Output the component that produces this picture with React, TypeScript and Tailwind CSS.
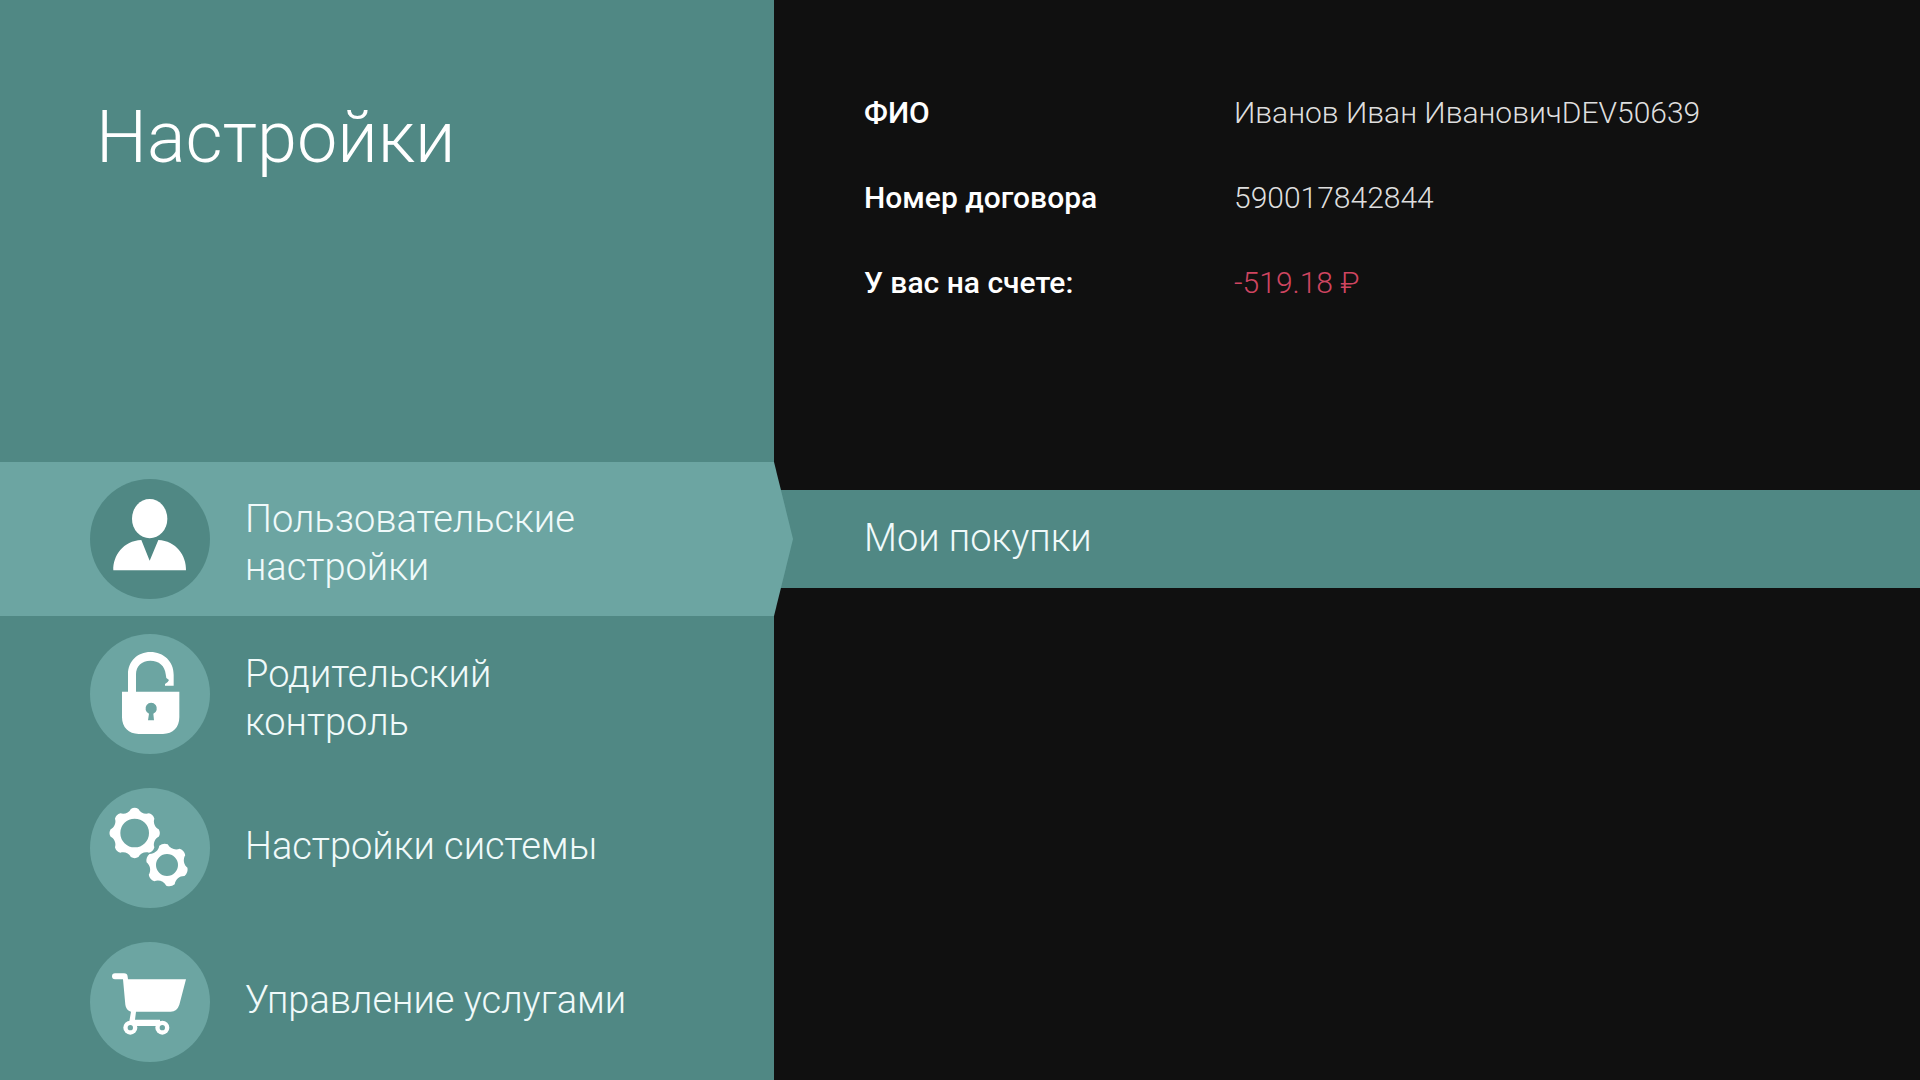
import type { ReactNode } from "react";

function gearPath(cx: number, cy: number, outer: number, dip: number, teeth: number, turn: number) {
  const step = (Math.PI * 2) / teeth;
  const at = (r: number, a: number) =>
    `${(cx + r * Math.sin(a)).toFixed(1)} ${(cy - r * Math.cos(a)).toFixed(1)}`;
  let d = "";
  for (let i = 0; i < teeth; i++) {
    const a = (turn * Math.PI) / 180 + i * step;
    d += `${i ? "L" : "M"}${at(outer - 3, a - step * 0.2)}`;
    d += `Q${at(outer + 3, a)} ${at(outer - 3, a + step * 0.2)}`;
    d += `C${at(dip, a + step * 0.34)} ${at(dip, a + step * 0.66)} ${at(outer - 3, a + step * 0.8)}`;
  }
  return d + "Z";
}

function ring(cx: number, cy: number, r: number) {
  return `M${cx - r} ${cy}a${r} ${r} 0 1 0 ${r * 2} 0a${r} ${r} 0 1 0 ${-r * 2} 0Z`;
}

function Glyph({ children }: { children: ReactNode }) {
  return (
    <svg viewBox="30 26 360 360" className="size-full" fill="#fff" aria-hidden="true">
      {children}
    </svg>
  );
}

const userIcon = (
  <Glyph>
    <ellipse cx="209" cy="145" rx="53" ry="59" />
    <path d="M100 300C98 257 130 211 184 209L209 271L235 209C288 211 320 257 318 300Z" />
  </Glyph>
);

const lockIcon = (
  <Glyph>
    <path
      fillRule="evenodd"
      d="M144 199V146C144 108 173 80 211 80C251 80 281 108 281 148V181H255V176Q264 172 267 164L259 158L257 146C255 122 237 106 211 106C185 106 168 122 168 147V199H298V276C298 306 279 326 249 326H176C146 326 126 306 126 276V199ZM204 285L207 265A17 17 0 1 1 220 265L222 285Z"
    />
  </Glyph>
);

const gearsIcon = (
  <Glyph>
    <path fillRule="evenodd" d={gearPath(164, 161, 76, 63, 8, 0) + ring(164, 161, 43)} />
    <path fillRule="evenodd" d={gearPath(261, 257, 65, 50, 6, -10) + ring(261, 257, 33)} />
  </Glyph>
);

const cartIcon = (
  <Glyph>
    <path d="M105 120H132Q142 120 143 130L144 138H318L298 214Q291 235 272 235H168L165 259H240V278H160Q145 278 148 264L153 235Q138 230 136 214L129 138H105Q96 138 96 129Q96 120 105 120Z" />
    <circle cx="151" cy="283" r="21" />
    <circle cx="247" cy="283" r="21" />
    <circle cx="151" cy="283" r="8" fill="#6ca5a2" />
    <circle cx="247" cy="283" r="8" fill="#6ca5a2" />
  </Glyph>
);

const items = [
  { label: "Пользовательские настройки", icon: userIcon, active: true, twoLine: true },
  { label: "Родительский контроль", icon: lockIcon, active: false, twoLine: true },
  { label: "Настройки системы", icon: gearsIcon, active: false, twoLine: false },
  { label: "Управление услугами", icon: cartIcon, active: false, twoLine: false },
];

const account = [
  { term: "ФИО", value: "Иванов Иван ИвановичDEV50639", tone: "text-[#dedede]" },
  { term: "Номер договора", value: "590017842844", tone: "text-[#dedede]" },
  { term: "У вас на счете:", value: "-519.18 ₽", tone: "text-[#cf4560]" },
];

export default function App() {
  return (
    <div className="flex min-h-screen bg-[#101010] font-['Roboto',sans-serif] font-light text-white">
      <aside className="relative z-10 flex w-[774px] shrink-0 flex-col bg-[#508884]">
        <h1 className="h-[462px] shrink-0 pt-24 pl-24 text-[72px] leading-[84px] font-light">Настройки</h1>
        <nav aria-label="Настройки">
          {items.map((item) => (
            <button
              key={item.label}
              type="button"
              aria-current={item.active ? "page" : undefined}
              className={
                item.active
                  ? "mb-px flex h-[154px] w-[calc(100%+19px)] items-center gap-[35px] bg-[#6ca5a2] pl-[90px] text-left [clip-path:polygon(0_0,calc(100%-19px)_0,100%_50%,calc(100%-19px)_100%,0_100%)]"
                  : "flex h-[154px] w-full items-center gap-[35px] pl-[90px] text-left"
              }
            >
              <span
                className={
                  item.active
                    ? "size-[120px] shrink-0 rounded-full bg-[#508884]"
                    : "size-[120px] shrink-0 rounded-full bg-[#6ca5a2]"
                }
              >
                {item.icon}
              </span>
              <span
                className={
                  item.twoLine
                    ? "w-[400px] pt-2 text-[38px] leading-[48px] text-[#f0fafa]"
                    : "w-[400px] pb-1 text-[38px] leading-[48px] text-[#f0fafa]"
                }
              >
                {item.label}
              </span>
            </button>
          ))}
        </nav>
      </aside>
      <main className="min-w-0 flex-1">
        <dl className="flex h-[490px] flex-col gap-[41px] pt-[91px] pl-[90px] text-[30px] leading-[44px]">
          {account.map((row) => (
            <div key={row.term} className="flex">
              <dt className="w-[370px] shrink-0 font-medium">{row.term}</dt>
              <dd className={row.tone}>{row.value}</dd>
            </div>
          ))}
        </dl>
        <button
          type="button"
          className="flex h-[98px] w-full items-center bg-[#508884] pb-0.5 pl-[90px] text-left text-[38px] leading-[48px] text-[#f0fafa]"
        >
          Мои покупки
        </button>
      </main>
    </div>
  );
}
